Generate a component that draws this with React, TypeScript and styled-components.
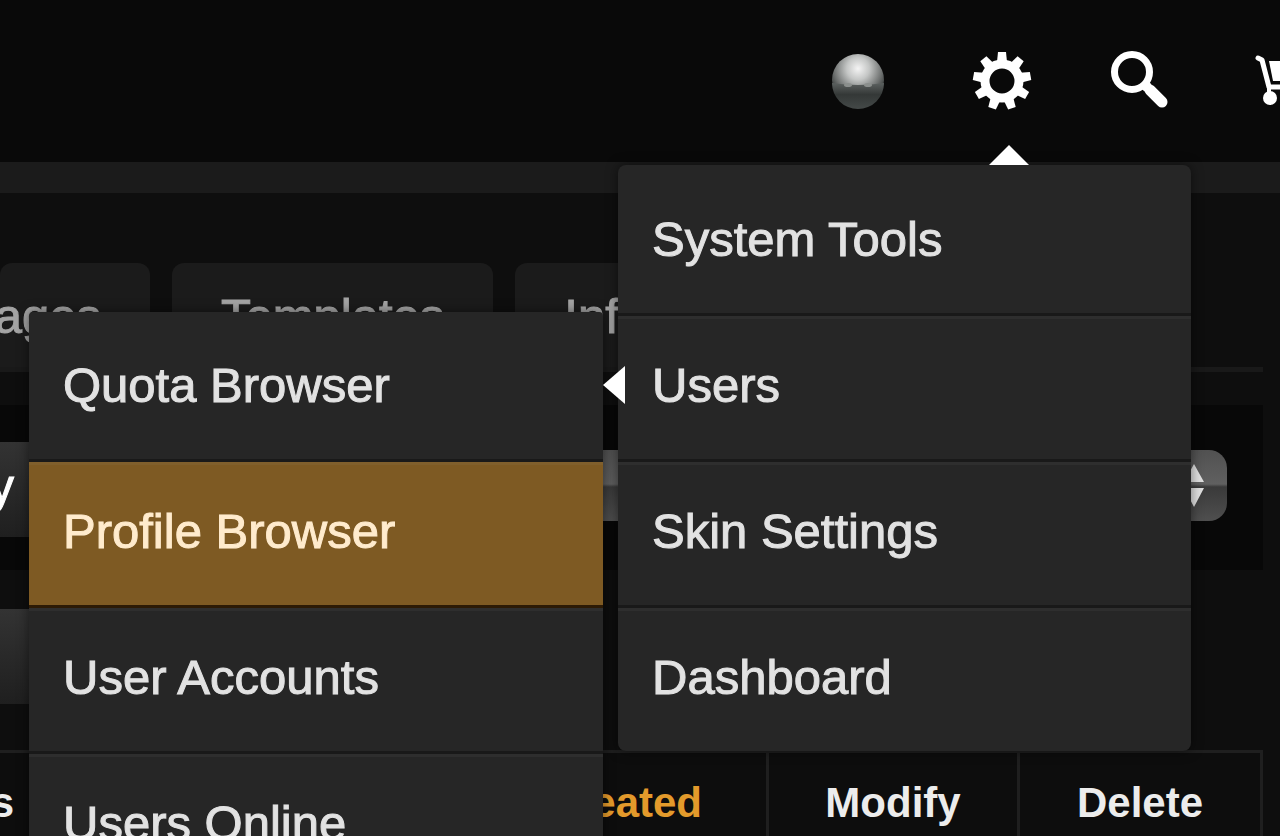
import React from "react";
import styled, { createGlobalStyle, css } from "styled-components";

const GlobalStyle = createGlobalStyle`
  *, *::before, *::after { box-sizing: border-box; }
  body {
    margin: 0;
    overflow: hidden;
    background: #0e0e0e;
    font-family: "Liberation Sans", Arial, Helvetica, sans-serif;
  }
  button, select { font: inherit; }
`;

const Page = styled.div`
  height: 100vh;
  overflow: hidden;
  display: flex;
  flex-direction: column;
`;

const Header = styled.header`
  position: relative;
  z-index: 2;
  flex: none;
  height: 162px;
  display: flex;
  align-items: center;
  justify-content: flex-end;
  background: #090909;
`;

const IconBar = styled.nav`
  flex: none;
  display: flex;
  margin-right: -75px;
`;

const IconButton = styled.button`
  width: 142px;
  height: 100px;
  padding: 0;
  border: 0;
  background: none;
  display: flex;
  align-items: center;
  justify-content: center;
  svg {
    width: 60px;
    height: 60px;
    overflow: visible;
  }
`;

const menuPanel = css`
  position: absolute;
  margin: 0;
  list-style: none;
  background: #262626;
  border-radius: 8px;
  box-shadow: 0 0 12px rgba(0, 0, 0, 0.5);
`;

const Menu = styled.ul`
  ${menuPanel}
  top: 165px;
  right: 89px;
  width: 573px;
  padding: 5px 0 0;
  &::before {
    content: "";
    position: absolute;
    top: -20px;
    right: 162px;
    border: solid transparent;
    border-width: 0 20px 20px;
    border-bottom-color: #fff;
  }
`;

const SubMenu = styled.ul`
  ${menuPanel}
  top: -4px;
  right: calc(100% + 15px);
  width: 574px;
  padding: 4px 0 0;
  border-radius: 4px;
`;

const MenuItem = styled.li<{ $open?: boolean }>`
  position: relative;
  ${(p) =>
    p.$open &&
    css`
      &::before {
        content: "";
        position: absolute;
        z-index: 1;
        top: 50px;
        left: -15px;
        border: solid transparent;
        border-width: 19px 22px 19px 0;
        border-right-color: #fff;
      }
    `}
`;

const MenuLink = styled.a<{ $active?: boolean }>`
  display: block;
  padding: 38px 34px 46px;
  border-top: 3px solid #2e2e2e;
  border-bottom: 3px solid #191919;
  font-size: 49px;
  line-height: 56px;
  -webkit-text-stroke: 1px currentColor;
  white-space: nowrap;
  text-decoration: none;
  color: #e2e2e2;
  li:first-child > & {
    border-top-color: transparent;
  }
  li:last-child > & {
    border-bottom: 0;
  }
  ${(p) =>
    p.$active &&
    css`
      background: #7e5a23;
      border-top-color: #805f2c;
      border-bottom-color: #2c1a05;
      color: #ffebcd;
    `}
`;

const Strip = styled.div`
  flex: none;
  height: 31px;
  background: #1b1b1b;
`;

const Main = styled.main`
  padding: 70px 17px 0 0;
`;

const Tabs = styled.nav`
  display: flex;
  gap: 22px;
  border-bottom: 5px solid #191919;
`;

const Tab = styled.a<{ $cut?: boolean }>`
  display: flex;
  justify-content: flex-end;
  width: ${(p) => (p.$cut ? "150px" : "auto")};
  padding: 25px 49px 23px;
  border-radius: 12px 12px 0 0;
  background: #1b1b1b;
  color: #a4a4a4;
  font-size: 49px;
  line-height: 56px;
  -webkit-text-stroke: 1px currentColor;
  text-decoration: none;
`;

const Panel = styled.section`
  display: flex;
  align-items: flex-start;
  justify-content: space-between;
  margin-top: 33px;
  padding: 37px 36px 33px 0;
  background: #080808;
`;

const Block = styled.button`
  display: flex;
  justify-content: flex-end;
  width: 80px;
  height: 95px;
  padding: 16px 66px 0 0;
  border: 0;
  background: linear-gradient(#333, #1f1f1f);
  color: #fff;
  font-size: 49px;
  line-height: 56px;
  -webkit-text-stroke: 1px currentColor;
`;

const SelectWrap = styled.label`
  position: relative;
  width: 660px;
  margin-top: 8px;
  svg {
    position: absolute;
    top: 14px;
    right: 16px;
    width: 28px;
    height: 44px;
    pointer-events: none;
  }
`;

const Select = styled.select`
  display: block;
  width: 100%;
  height: 71px;
  appearance: none;
  border: 0;
  border-radius: 18px;
  background: linear-gradient(#515151, #606060 48%, #3a3a3a 52%, #4f4f4f);
`;

const Lower = styled.div`
  margin: 39px 0 46px;
`;

const Table = styled.table`
  width: 100%;
  table-layout: fixed;
  border-collapse: separate;
  border-spacing: 0;
  border-top: 3px solid #1f1f1f;
  background: #0d0d0d;
`;

const Th = styled.th<{ $width?: number; $sorted?: boolean }>`
  width: ${(p) => (p.$width ? `${p.$width}px` : "auto")};
  height: 110px;
  padding: ${(p) => (p.$sorted ? "26px 64px 0 0" : "26px 0 0")};
  border-right: 3px solid #1f1f1f;
  vertical-align: top;
  text-align: ${(p) => (p.$sorted ? "right" : "center")};
  font-size: 42px;
  line-height: 48px;
  color: ${(p) => (p.$sorted ? "#e39a2b" : "#ececec")};
`;

const EdgeTh = styled(Th)`
  border-right: 0;
  text-align: right;
  direction: rtl;
`;

const SphereIcon = () => (
  <svg viewBox="0 0 60 60" aria-hidden="true">
    <defs>
      <radialGradient id="shine" cx="0.5" cy="0.28" r="0.62">
        <stop offset="0" stopColor="#f4f4f4" />
        <stop offset="0.35" stopColor="#c4c6c5" />
        <stop offset="0.75" stopColor="#6c6f6e" />
        <stop offset="1" stopColor="#2f3332" />
      </radialGradient>
      <linearGradient id="base" x1="0" y1="0" x2="0" y2="1">
        <stop offset="0" stopColor="#5c6160" />
        <stop offset="0.45" stopColor="#343837" />
        <stop offset="1" stopColor="#444948" />
      </linearGradient>
    </defs>
    <circle cx="30" cy="29" r="26" fill="url(#shine)" />
    <path d="M4 32Q30 36 56 32A26 26 0 0 1 4 32Z" fill="url(#base)" />
    <ellipse cx="20" cy="34" rx="4" ry="2" fill="#8b8f8d" />
    <ellipse cx="40" cy="34" rx="4" ry="2" fill="#8b8f8d" />
  </svg>
);

const GearIcon = () => (
  <svg viewBox="0 0 60 60" aria-hidden="true">
    <circle cx="32" cy="30" r="17" fill="none" stroke="#fff" strokeWidth="9" />
    {[0, 40, 80, 120, 160, 200, 240, 280, 320].map((angle) => (
      <path key={angle} d="M27 11L28 1H36L37 11Z" fill="#fff" transform={`rotate(${angle} 32 30)`} />
    ))}
  </svg>
);

const SearchIcon = () => (
  <svg viewBox="0 0 60 60" aria-hidden="true" fill="none" stroke="#fff">
    <circle cx="20" cy="21" r="17.5" strokeWidth="7" />
    <path d="M33 34L36 37" strokeWidth="10" />
    <path d="M38 39L50 51" strokeWidth="11" strokeLinecap="round" />
  </svg>
);

const CartIcon = () => (
  <svg viewBox="0 0 60 60" aria-hidden="true">
    <path d="M4 7L8 9L15 36H48" fill="none" stroke="#fff" strokeWidth="5" strokeLinecap="round" strokeLinejoin="round" />
    <path d="M15 10H58L51 30H19Z" fill="#fff" />
    <path d="M15 36V46" stroke="#fff" strokeWidth="4" />
    <circle cx="16" cy="47" r="7" fill="#fff" />
    <circle cx="44" cy="47" r="7" fill="#fff" />
  </svg>
);

const icons = [
  { label: "Profile", Icon: SphereIcon },
  { label: "Settings", Icon: GearIcon },
  { label: "Search", Icon: SearchIcon },
  { label: "Cart", Icon: CartIcon },
];

const userLinks = ["Quota Browser", "Profile Browser", "User Accounts", "Users Online"];

export default function App() {
  return (
    <Page>
      <GlobalStyle />
      <Header>
        <IconBar>
          {icons.map(({ label, Icon }) => (
            <IconButton key={label} type="button" aria-label={label}>
              <Icon />
            </IconButton>
          ))}
        </IconBar>
        <Menu>
          <MenuItem>
            <MenuLink href="#system">System Tools</MenuLink>
          </MenuItem>
          <MenuItem $open>
            <MenuLink href="#users">Users</MenuLink>
            <SubMenu>
              {userLinks.map((text) => (
                <li key={text}>
                  <MenuLink href="#users" $active={text === "Profile Browser"}>
                    {text}
                  </MenuLink>
                </li>
              ))}
            </SubMenu>
          </MenuItem>
          <MenuItem>
            <MenuLink href="#skin">Skin Settings</MenuLink>
          </MenuItem>
          <MenuItem>
            <MenuLink href="#dashboard">Dashboard</MenuLink>
          </MenuItem>
        </Menu>
      </Header>
      <Strip />
      <Main>
        <Tabs>
          <Tab href="#pages" $cut>ages</Tab>
          <Tab href="#templates">Templates</Tab>
          <Tab href="#info">Inf</Tab>
        </Tabs>
        <Panel>
          <Block type="button">y</Block>
          <SelectWrap>
            <Select aria-label="Filter" />
            <svg viewBox="0 0 28 44" aria-hidden="true">
              <path d="M1 18L11 0L21 18ZM1 24H21L11 43Z" fill="#e0e0e0" />
            </svg>
          </SelectWrap>
        </Panel>
        <Lower>
          <Block type="button" aria-label="Apply" />
        </Lower>
        <Table>
          <thead>
            <tr>
              <EdgeTh $width={14}>s</EdgeTh>
              <Th $sorted>Created</Th>
              <Th $width={251}>Modify</Th>
              <Th $width={243}>Delete</Th>
            </tr>
          </thead>
        </Table>
      </Main>
    </Page>
  );
}
